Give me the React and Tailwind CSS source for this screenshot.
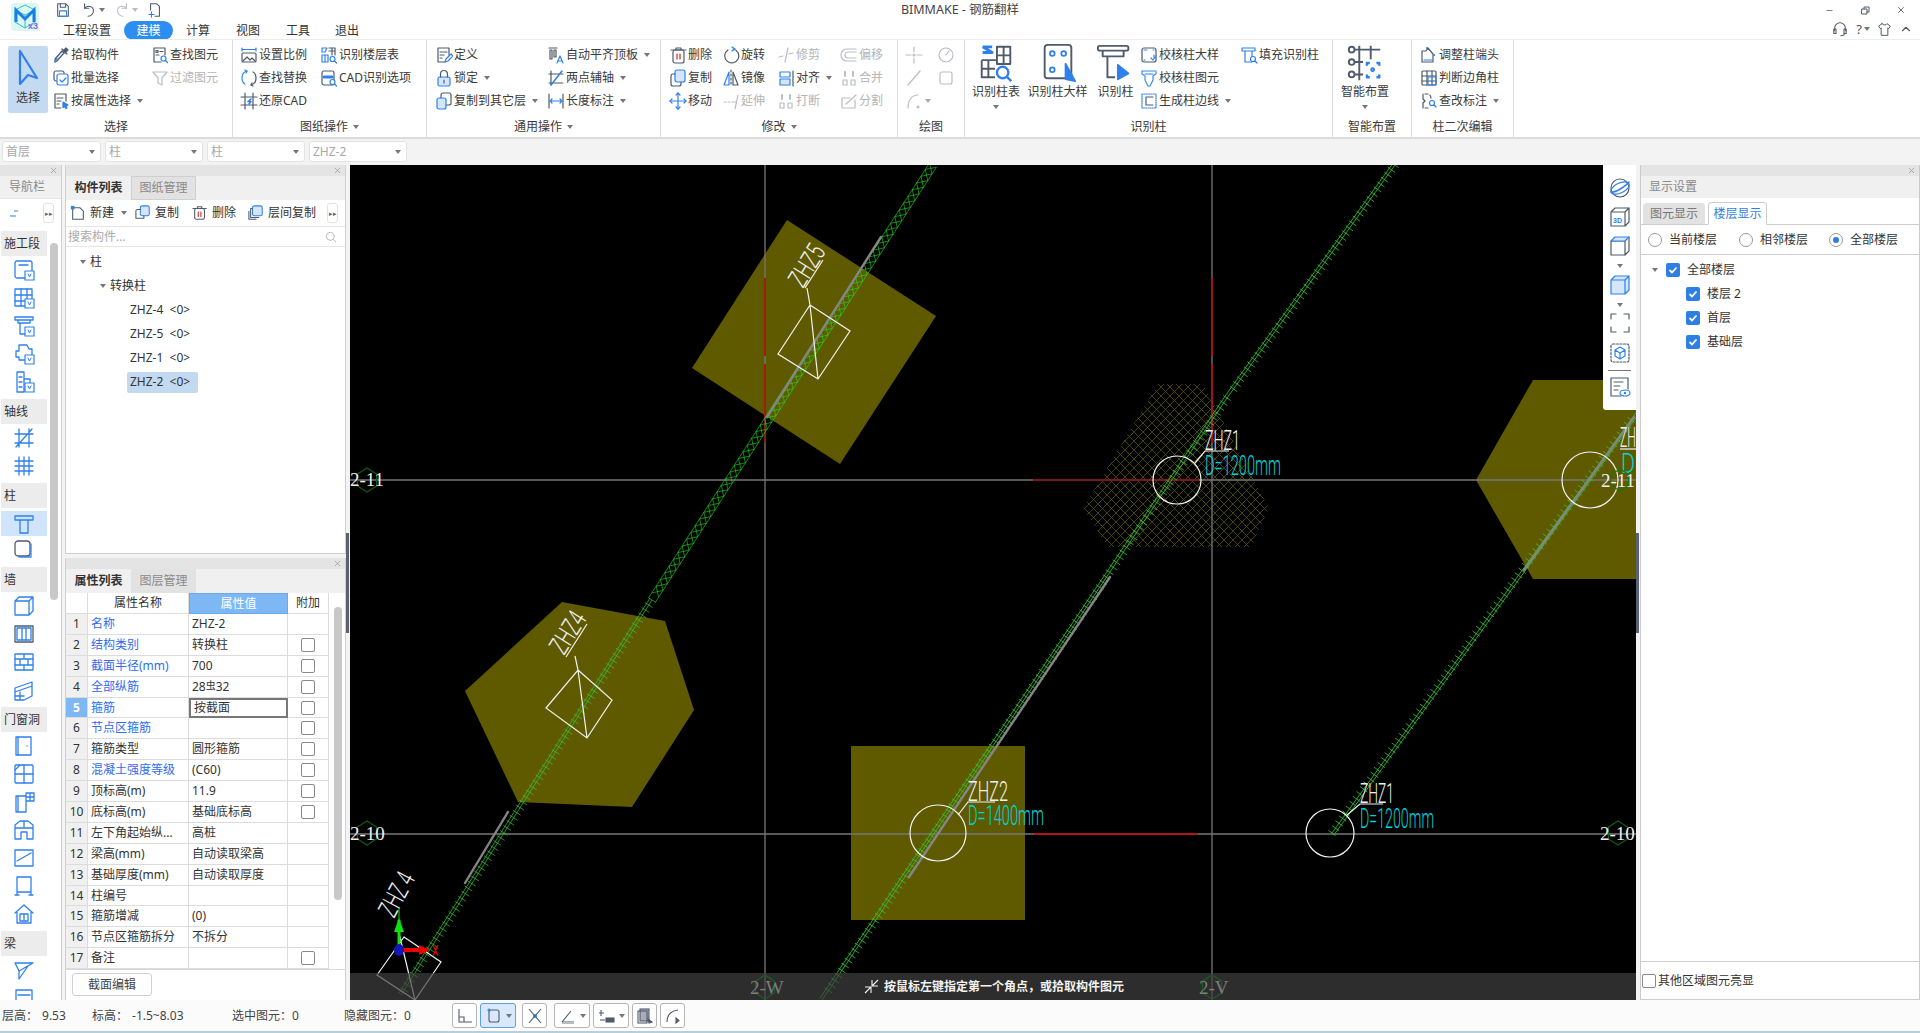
import React from 'react';
import { X, Minus, ChevronUp } from 'lucide-react';

const G = '#4f5b6b';
const B = '#2f80ed';
const L = '#b9bdc4';

const Svg = ({ s = 18, v = 18, children, c = 'shrink-0' }) => (
  <svg width={s} height={s} viewBox={`0 0 ${v} ${v}`} fill="none" stroke={G} strokeWidth="1.2" strokeLinecap="round" strokeLinejoin="round" className={c}>
    {children}
  </svg>
);

// ribbon icons, all drawn on an 18 box
const icons = {
  pick: <><path d="M3 16l2-1 7-8-2-2-7 8z" fill="#e8eef7" /><path d="M10 3l5 5" /><path d="M11 5l3-3 2 2-3 3" fill={G} /><path d="M3 16l2-4" stroke={B} /></>,
  batch: <><rect x="2" y="2" width="10" height="10" rx="2" /><rect x="5" y="5" width="11" height="11" rx="2" stroke={B} fill="#fff" /><path d="M8 11l2 2 4-4" stroke={B} /></>,
  prop: <><path d="M3 2h11v7M3 2v14h6" /><path d="M5 6h6M5 9h4M5 12h2" /><path d="M11 10l5 3-2 1 1 2-1 .5-1-2-2 1z" fill={B} stroke={B} /></>,
  find: <><path d="M3 2h11v7M3 2v14h7" /><rect x="5" y="4.5" width="2" height="2" /><path d="M9 5.500h3M5 9h3" /><circle cx="12.500" cy="12.500" r="2.500" stroke={B} /><path d="M14.500 14.500l2 2" stroke={B} /></>,
  filter: <><path d="M2 3h14l-5 6v7l-4-2V9z" stroke={L} /></>,
  scale: <><path d="M2 2v3M16 2v3M2 3.500h14" stroke={B} /><rect x="2" y="7" width="14" height="9" rx="1" /><path d="M3 15l4-4 3 3 2-2 3 3" /></>,
  layer: <><path d="M2 2h5l-2 4H2zM2 9h6v7H2zM5 9v7" stroke={B} /><path d="M9 2h6v7M12 2v7M9 5h6" /><circle cx="12.500" cy="13" r="2.500" stroke={B} /><path d="M14.500 15l2 2" stroke={B} /></>,
  replace: <><path d="M7 2C3 3 2 6 2 9s1 5 3 6" stroke={B} /><path d="M5 1l2 1-1 2" stroke={B} /><path d="M11 16c4-1 5-4 5-7s-1-5-3-6" stroke={G} /><path d="M13 17l-2-1 1-2" /></>,
  cad: <><rect x="2" y="2" width="12" height="14" rx="2" /><path d="M4 8h8" stroke={B} strokeWidth="3" /><circle cx="12.500" cy="13" r="2.500" stroke={B} fill="#fff" /><path d="M14.500 15l2 2" stroke={B} /></>,
  restore: <><path d="M5 1v16M13 1v16M1 5h16M1 13h16" /><path d="M11 7L8 9.500h3l-2 2.500" stroke={B} strokeWidth="1.6" /></>,
  define: <><path d="M3 2h11v7M3 2v14h7" /><path d="M5 6h7M5 9h4M5 12h2" /><path d="M10 16l1-3 5-5 2 2-5 5z" stroke={B} /></>,
  lock: <><rect x="3" y="8" width="12" height="9" rx="1.500" fill="#d6e6fa" stroke={B} /><path d="M5.500 8V5a3.500 3.500 0 017 0v3" /><path d="M9 11v3" /></>,
  copyTo: <><rect x="6" y="1" width="10" height="12" rx="2" /><rect x="2" y="6" width="9" height="11" rx="2" stroke={B} fill="#d6e6fa" /></>,
  align: <><path d="M2 2h8" /><rect x="3" y="4" width="2" height="9" /><rect x="7" y="4" width="2" height="7" /><path d="M10 17l3-7 3 7M11 15h4" stroke={B} /></>,
  two: <><path d="M2 5h14M2 14h14M4 2v14" /><path d="M4 16L15 2" stroke={B} strokeWidth="1.500" /></>,
  dim: <><path d="M2 2v14M16 2v14" /><path d="M3 9h12M5 7L3 9l2 2M13 7l2 2-2 2" stroke={B} /></>,
  del: <><rect x="4" y="4" width="11" height="13" rx="2" /><path d="M2 4h15M7 4V2h5v2" /><path d="M8 8v5M11 8v5" stroke="#d02020" /></>,
  rotate: <><path d="M11 3a7 7 0 11-5 1" /><path d="M10 1l3 2-3 2" stroke={B} /></>,
  trim: <><path d="M2 11l4-1M12 8l4-1M11 2L8 16" stroke={L} /></>,
  offset: <><path d="M16 3H7a5 5 0 000 12h9M16 6H8a3 3 0 000 6h8" stroke={L} /></>,
  copy: <><rect x="6" y="1" width="10" height="12" rx="2" stroke={B} fill="#d6e6fa" /><path d="M6 5H4a2 2 0 00-2 2v8a2 2 0 002 2h6a2 2 0 002-2v-2" /></>,
  mirror: <><path d="M7 3L2 16h5z" stroke={B} /><path d="M11 3l5 13h-5z" /><path d="M9 1v16" strokeDasharray="2 2" /></>,
  alignL: <><path d="M16 2v15" /><rect x="3" y="3" width="10" height="5" stroke={B} /><rect x="3" y="10" width="10" height="6" stroke={B} fill="#d6e6fa" /></>,
  merge: <><rect x="3" y="11" width="4" height="5" stroke={L} /><rect x="11" y="11" width="4" height="5" stroke={L} /><path d="M5 3v4M13 3v4M5 3h.1M13 3h.1" stroke={L} strokeWidth="2" /></>,
  move: <><path d="M9 1v16M1 9h16" stroke={B} /><path d="M7 3l2-2 2 2M7 15l2 2 2-2M3 7L1 9l2 2M15 7l2 2-2 2" stroke={B} /></>,
  extend: <><path d="M2 10h2M6 10h2M10 10h4M16 3l-3 14" stroke={L} /></>,
  brk: <><rect x="3" y="11" width="4" height="5" stroke={L} /><rect x="11" y="11" width="4" height="5" stroke={L} /><path d="M5 3v4M13 3v4" stroke={L} strokeWidth="2" /></>,
  split: <><path d="M15 8v8H2V6h8" stroke={L} /><path d="M6 12L16 3" stroke={L} /></>,
  point: <><path d="M9 1v5M9 12v5M1 9h5M12 9h5" stroke={L} /><circle cx="9" cy="9" r="1" stroke={L} /></>,
  dial: <><circle cx="9" cy="9" r="7" stroke={L} /><path d="M9 9l3-4" stroke={L} /></>,
  lineD: <><path d="M3 16L15 2" stroke={L} /></>,
  rectD: <><rect x="3" y="3" width="12" height="12" rx="2" stroke={L} /></>,
  arcD: <><path d="M3 16C3 8 7 3 13 3" stroke={L} /><circle cx="13" cy="15" r="1" stroke={L} /></>,
  chkDetail: <><rect x="2" y="2" width="14" height="14" rx="2" /><path d="M4 4h3M4 14h1M13 4h1M14 9v3M11 12l2 2 3-4" stroke={B} strokeDasharray="1.500 1" /></>,
  chkUnit: <><path d="M2 2h14v3l-3 2v4l-3 6H8l-3-6V7L2 5z" stroke={B} strokeDasharray="1.500 1" /><path d="M5 5h8" stroke={B} /></>,
  genEdge: <><rect x="2" y="2" width="14" height="14" stroke={B} strokeDasharray="1 1.200" /><path d="M13 5H6v8h7" /></>,
  fill: <><path d="M2 2h13v3H2zM5 5v11h7V5" stroke={B} /><circle cx="13" cy="13" r="2.500" stroke={B} fill="#fff" /><path d="M15 15l2 2" stroke={B} /></>,
  adjust: <><path d="M2 5h4l2-3 5 6v8H2z" /><path d="M7 2h.1M14 9h.1" stroke={B} strokeWidth="2" /><path d="M4 14h8" stroke={B} /></>,
  corner: <><rect x="2" y="2" width="14" height="14" rx="1" /><path d="M2 7h14M2 12h14M7 2v14M12 2v14" /><rect x="8" y="8" width="8" height="8" stroke={B} /></>,
  edit: <><path d="M3 2v5l2 2-2 2v5" /><path d="M5 2h3M5 16h3" /><circle cx="12" cy="11" r="2.500" stroke={B} /><path d="M14 13l2 2" stroke={B} /><path d="M10 3l1 3" /></>,
};

const Caret = ({ c = '', color = 'border-t-[#777]' }) => (
  <span className={`inline-block h-0 w-0 border-x-[3px] border-t-[4px] border-x-transparent ${color} ${c}`} />
);

const Ribbon = ({ ic, t, caret, dis, c = '' }) => (
  <div className={`flex h-[23px] items-center ${c}`}>
    <Svg>{icons[ic]}</Svg>
    {t && <span className={`ml-[1px] whitespace-nowrap ${dis ? 'text-[#b5b5b5]' : 'text-[#3a3a3a]'}`}>{t}</span>}
    {caret && <Caret c="ml-[6px]" />}
  </div>
);

const Group = ({ w, label, caret, children }) => (
  <div className={`flex h-[97px] shrink-0 flex-col border-r border-[#dcdcdc] ${w}`}>
    <div className="flex h-[77px] pt-[3px]">{children}</div>
    <div className="flex h-[20px] items-center justify-center text-[#3a3a3a]">
      {label}
      {caret && <Caret c="ml-[5px]" />}
    </div>
  </div>
);

const Big = ({ t, caret, w, children }) => (
  <div className={`flex shrink-0 flex-col items-center ${w}`}>
    <svg width="44" height="40" viewBox="0 0 44 42" fill="none" stroke={G} strokeWidth="2" strokeLinejoin="round" className="shrink-0">{children}</svg>
    <span className="whitespace-nowrap leading-[18px] text-[#3a3a3a]">{t}</span>
    {caret && <Caret c="mt-[4px]" />}
  </div>
);

const NavV = ({ children }) => (
  <Svg s={22} v={22}>
    <g stroke={B} strokeWidth="1.300">{children}</g>
    <rect x="12" y="12" width="9" height="9" fill="#fff" stroke={B} />
    <path d="M15 15l1.500 3 1.500-3" stroke={B} strokeWidth="1" />
  </Svg>
);

const NavI = ({ children }) => (
  <Svg s={22} v={22}>
    <g stroke={B} strokeWidth="1.300">{children}</g>
  </Svg>
);

const navSections = [
  {
    title: '施工段', gap: 'mt-0', items: [
      <NavV><rect x="2" y="2" width="17" height="17" rx="2" /><path d="M6 6h9" /></NavV>,
      <NavV><rect x="2" y="2" width="17" height="17" /><path d="M2 8h17M2 14h17M8 2v17M14 2v17" /></NavV>,
      <NavV><path d="M2 2h18v3H2zM5 5v3h12V5M7 8v11h6" /></NavV>,
      <NavV><path d="M6 2h8l2 4h3v11H6v-3H3V8h3z" /></NavV>,
      <NavV><path d="M4 1h7v20H4zM11 8h6v5M6 6h3M6 11h3M6 16h3" /></NavV>,
    ],
  },
  {
    title: '轴线', gap: 'mt-[3px]', items: [
      <NavI><path d="M2 7h18M2 16h18M6 2v18M16 2v18M3 20L19 2" /></NavI>,
      <NavI><path d="M2 6h18M2 11h18M2 16h18M6 2v18M11 2v18M16 2v18" /></NavI>,
    ],
  },
  {
    title: '柱', gap: 'mt-[3px]', items: [
      <NavI><path d="M2 3h18v4H2zM6 7h10M7 7v13h8V7" /></NavI>,
      <NavI><rect x="2" y="2" width="15" height="15" rx="3" stroke={G} /><path d="M18 5v13H6" strokeDasharray="2 1" /></NavI>,
    ],
  },
  {
    title: '墙', gap: 'mt-[3px]', items: [
      <NavI><path d="M2 6h14v14H2zM2 6l4-4h14v14l-4 4M16 6l4-4" /></NavI>,
      <NavI><rect x="2" y="3" width="18" height="16" stroke={G} /><path d="M4 5h14v12H4zM9 5v12M13 5v12" /></NavI>,
      <NavI><rect x="2" y="3" width="18" height="16" /><path d="M2 8h18M2 14h18M11 3v5M7 8v6M15 8v6M11 14v5" /></NavI>,
      <NavI><path d="M2 9l17-6v4L2 13zM2 13v8h9l8-4v-10M7 13v8M2 17h9" /></NavI>,
    ],
  },
  {
    title: '门窗洞', gap: 'mt-[3px]', items: [
      <NavI><rect x="3" y="2" width="15" height="18" /><path d="M5 2v18M14 11h.1" /></NavI>,
      <NavI><rect x="2" y="2" width="18" height="18" rx="1" /><path d="M2 11h18M11 2v18M2 7l5-5" /></NavI>,
      <NavI><path d="M3 5h10v16H3zM5 5v16M13 2h8v8h-8zM17 2v8M13 6h8" /></NavI>,
      <NavI><path d="M2 20V6l5-4h8l5 4v14h-6v-7H8v7zM2 9h18M11 2v7" /></NavI>,
      <NavI><rect x="2" y="3" width="18" height="16" /><path d="M4 14L18 6" /></NavI>,
      <NavI><path d="M4 20V2h14v18M2 20h4M16 20h4M4 17h14" /></NavI>,
      <NavI><path d="M2 10l9-8 9 8M4 9v11h14V9M7 11h8v7H7zM11 11v7" /></NavI>,
    ],
  },
  {
    title: '梁', gap: 'mt-[3px]', items: [
      <NavI><path d="M2 4h18l-14 8zM6 12v8M6 20l9-13" /></NavI>,
      <NavI><rect x="3" y="3" width="16" height="16" /><path d="M5 8h12" /></NavI>,
    ],
  },
];

const rows = [
  ['名称', 'ZHZ-2', 1, 0],
  ['结构类别', '转换柱', 1, 1],
  ['截面半径(mm)', '700', 1, 1],
  ['全部纵筋', <>28<span className="relative -top-[2px] text-[10px]">虫</span>32</>, 1, 1],
  ['箍筋', '按截面', 1, 1],
  ['节点区箍筋', '', 1, 1],
  ['箍筋类型', '圆形箍筋', 0, 1],
  ['混凝土强度等级', '(C60)', 1, 1],
  ['顶标高(m)', '11.9', 0, 1],
  ['底标高(m)', '基础底标高', 0, 1],
  ['左下角起始纵...', '高桩', 0, 0],
  ['梁高(mm)', '自动读取梁高', 0, 0],
  ['基础厚度(mm)', '自动读取厚度', 0, 0],
  ['柱编号', '', 0, 0],
  ['箍筋增减', '(0)', 0, 0],
  ['节点区箍筋拆分', '不拆分', 0, 0],
  ['备注', '', 0, 1],
];

const PanelHead = () => (
  <div className="flex h-[11px] shrink-0 items-center justify-end bg-[#e4e4e4] pr-[3px]">
    <X size={9} color="#999" />
  </div>
);

const Expand = () => (
  <div className="flex h-[20px] w-[11px] items-center justify-center rounded-[3px] border border-[#e2e2e2] bg-white text-[7px] leading-none text-[#666]">▸▸</div>
);

const Check = ({ c = '' }) => (
  <span className={`flex h-[14px] w-[14px] items-center justify-center rounded-[2px] bg-[#2e7fe4] ${c}`}>
    <svg width="10" height="10" viewBox="0 0 10 10" fill="none" stroke="#fff" strokeWidth="1.800"><path d="M1.500 5l2.500 2.500L8.500 2.500" /></svg>
  </span>
);

const Radio = ({ on, t, c }) => (
  <div className={`flex items-center ${c}`}>
    <span className="flex h-[14px] w-[14px] items-center justify-center rounded-full border border-[#999] bg-white">
      {on && <span className="h-[6px] w-[6px] rounded-full bg-[#2e7fe4]" />}
    </span>
    <span className="ml-[7px] text-[#333]">{t}</span>
  </div>
);

// the steel strips: rails with a cross or a rung every few pixels
function lattice(x1, y1, x2, y2, w, step, cross) {
  const len = Math.hypot(x2 - x1, y2 - y1);
  const ux = (x2 - x1) / len;
  const uy = (y2 - y1) / len;
  const nx = (-uy * w) / 2;
  const ny = (ux * w) / 2;
  const f = (n) => n.toFixed(1);
  let d = cross
    ? `M${f(x1 + nx)} ${f(y1 + ny)}L${f(x2 + nx)} ${f(y2 + ny)}M${f(x1 - nx)} ${f(y1 - ny)}L${f(x2 - nx)} ${f(y2 - ny)}`
    : `M${f(x1)} ${f(y1)}L${f(x2)} ${f(y2)}M${f(x1 + nx * 0.6)} ${f(y1 + ny * 0.6)}L${f(x2 + nx * 0.6)} ${f(y2 + ny * 0.6)}`;
  for (let i = 0; i + step <= len; i += step) {
    const ax = x1 + ux * i;
    const ay = y1 + uy * i;
    if (cross) {
      const bx = ax + ux * step;
      const by = ay + uy * step;
      d += `M${f(ax + nx)} ${f(ay + ny)}L${f(bx - nx)} ${f(by - ny)}M${f(ax - nx)} ${f(ay - ny)}L${f(bx + nx)} ${f(by + ny)}`;
    } else {
      d += `M${f(ax + nx)} ${f(ay + ny)}L${f(ax - nx)} ${f(ay - ny)}`;
    }
  }
  return d;
}

const CadText = ({ x, y, t, fill = '#f0f0f0', len, size = 27, rot }) => (
  <text
    x={rot === undefined ? x : 0}
    y={rot === undefined ? y : 0}
    transform={rot === undefined ? undefined : `translate(${x} ${y}) rotate(${rot})`}
    fill={fill}
    fontFamily="'Roboto', 'Liberation Sans', sans-serif"
    fontWeight="300"
    fontSize={size}
    textLength={len}
    lengthAdjust="spacingAndGlyphs"
  >
    {t}
  </text>
);

const Hex = ({ x, y, color = '#0d5f12', r = 12 }) => (
  <polygon points={`${x},${y - r} ${x + r * 0.8},${y - r / 2} ${x + r * 0.8},${y + r / 2} ${x},${y + r} ${x - r * 0.8},${y + r / 2} ${x - r * 0.8},${y - r / 2}`} fill="none" stroke={color} strokeWidth="1.200" />
);

const AxisLabel = ({ x, y, t, fill = '#f0f0f0' }) => (
  <text x={x} y={y} fill={fill} fontFamily="'Liberation Serif', serif" fontSize="19">{t}</text>
);

function Canvas() {
  return (
    <svg width="1286" height="835" viewBox="350 165 1286 835" className="block bg-black">
      <defs>
        <pattern id="hatch" width="9" height="9" patternUnits="userSpaceOnUse">
          <path d="M0 0L9 9M9 0L0 9" stroke="#57530a" strokeWidth="0.800" />
        </pattern>
      </defs>

      <polygon points="1158,384 1203,384 1269,508 1251,547 1108,547 1083,508" fill="url(#hatch)" />
      <polygon points="787,220 936,316 840,464 692,368" fill="#5f5a00" />
      <polygon points="562,602 665,621 694,710 632,807 518,802 465,691" fill="#5f5a00" />
      <rect x="851" y="746" width="174" height="174" fill="#5f5a00" />
      <polygon points="1476,480 1533,380 1640,380 1640,579 1533,579" fill="#5f5a00" />

      <g stroke="#777" strokeWidth="1.300">
        <path d="M350 480H1636M350 834H1636M765 165V1000M1212 165V1000" />
      </g>
      <g strokeWidth="1.500">
        <path d="M765 278V356M765 364V442" stroke="#b40000" />
        <path d="M1212 278V356M1212 364V443" stroke="#c00000" />
        <path d="M1033 480H1199" stroke="#8c0000" />
        <path d="M1034 834H1198" stroke="#d00000" />
      </g>

      <path d={lattice(933, 165, 652, 600, 8, 8, true)} stroke="#22e022" strokeWidth="0.600" fill="none" />
      <path d={lattice(652, 600, 401, 995, 9, 6)} stroke="#37c837" strokeWidth="0.700" fill="none" />
      <path d={lattice(1395, 165, 1227, 398, 9, 6)} stroke="#37c837" strokeWidth="0.800" fill="none" />
      <path d={lattice(1227, 398, 822, 1000, 9, 6)} stroke="#37c837" strokeWidth="0.800" fill="none" />
      <path d={lattice(1332, 833, 1636, 413, 9, 6)} stroke="#37c837" strokeWidth="0.800" fill="none" />

      <g stroke="#858585" strokeWidth="2.400" strokeLinecap="round">
        <path d="M881 237L767 417" />
        <path d="M508 812L465 883" />
        <path d="M1110 577L909 877" />
        <path d="M1634 417L1524 570" />
      </g>

      <g stroke="#f2f2f2" strokeWidth="1.200" fill="none">
        <path d="M810 305L850 331L818 379L778 354Z M810 305L818 379 M810 305L807 288 M805 288L823 260" />
        <path d="M578 670L612 700L587 738L546 708Z M578 670L587 738 M578 670L575 656 M566 657L587 624" />
        <circle cx="1177" cy="480" r="24" />
        <circle cx="1590" cy="480" r="28" />
        <circle cx="938" cy="833" r="28" />
        <circle cx="1330" cy="833" r="24" />
        <path d="M1195 463L1205 451H1229" />
        <path d="M958 815L968 802H995" />
        <path d="M1347 815L1360 804H1383" />
        <path d="M1620 449H1636" />
        <path d="M404 937L441 962L415 1000L377 975Z M399 933L415 1000" />
      </g>

      <CadText x={803} y={289} rot={-58} t="ZHZ5" len={44} />
      <CadText x={564} y={656} rot={-58} t="ZHZ4" len={44} />
      <CadText x={394} y={919} rot={-62} t="ZHZ 4" len={46} />
      <CadText x={1205} y={450} t="ZHZ1" len={35} />
      <CadText x={1205} y={475} t="D=1200mm" fill="#00d2da" len={76} />
      <CadText x={968} y={801} t="ZHZ2" len={40} />
      <CadText x={968} y={825} t="D=1400mm" fill="#00d2da" len={76} />
      <CadText x={1360} y={803} t="ZHZ1" len={34} />
      <CadText x={1360} y={828} t="D=1200mm" fill="#00d2da" len={74} />
      <CadText x={1620} y={447} t="ZH" len={16} />
      <CadText x={1621} y={473} t="D" fill="#00d2da" len={14} />

      <Hex x={367} y={480} />
      <AxisLabel x={350} y={486} t="2-11" />
      <Hex x={367} y={833} />
      <AxisLabel x={350} y={840} t="2-10" />
      <Hex x={1618} y={833} />
      <AxisLabel x={1600} y={840} t="2-10" />
      <Hex x={1620} y={480} r={11} color="#0d7a18" />
      <AxisLabel x={1601} y={487} t="2-11" />

      {/* ucs gizmo */}
      <path d="M399 945V920" stroke="#0fe00f" strokeWidth="3" />
      <path d="M399 908V922" stroke="#0fe00f" strokeWidth="1" />
      <polygon points="399,918 394,932 404,932" fill="#0fe00f" />
      <path d="M402 950H420" stroke="#f00000" strokeWidth="4" />
      <polygon points="430,950 419,945 419,955" fill="#f00000" />
      <ellipse cx="399" cy="950" rx="5" ry="6" fill="#1515b8" />
      <path d="M433 945L438 956M438 945L433 956" stroke="#f00000" strokeWidth="1.200" />
    </svg>
  );
}

const Tool = ({ w, on, caret, children }) => (
  <div className={`flex h-[25px] items-center justify-center rounded-[3px] border ${w} ${on ? 'border-[#5d9ee8] bg-[#d9e8fa]' : 'border-[#b5b5b5] bg-white'}`}>
    <svg width="18" height="18" viewBox="0 0 18 18" fill="none" stroke={G} strokeWidth="1.100">{children}</svg>
    {caret && <Caret c="ml-[3px]" />}
  </div>
);

export default function App() {
  return (
    <div className="flex h-[1033px] w-[1920px] flex-col overflow-hidden bg-[#f3f3f3] text-[12px] leading-none [font-family:'Noto_Sans','Noto_Sans_CJK_SC',sans-serif]">
      {/* title + menu */}
      <div className="grid h-[39px] shrink-0 grid-cols-[1fr_auto_1fr] bg-white">
        <div className="flex">
          <div className="ml-[11px] mt-[3px] h-[28px] w-[28px]">
            <svg width="28" height="28" viewBox="0 0 28 28" fill="none">
              <rect width="28" height="28" rx="4" fill="#dcf6f6" />
              <path d="M14 2l10 5v12l-10 6L4 19V7z" stroke="#35c2b5" strokeWidth="1" />
              <path d="M4 7l10 5 10-5M14 12v13" stroke="#35c2b5" strokeWidth="1" />
              <path d="M5 19V7l9 9 9-9v12" stroke="#1680e8" strokeWidth="3" />
              <text x="17" y="26" fontSize="9" fontWeight="700" fill="#8a63e0" fontFamily="Liberation Sans, sans-serif">x3</text>
            </svg>
          </div>
          <div className="ml-[16px] flex flex-col">
            <div className="flex h-[20px] items-center">
              <Svg s={16}><path d="M3 2h9l3 3v11H3z" /><path d="M6 2v4h6V2" /><rect x="5" y="10" width="8" height="6" stroke={B} /></Svg>
              <Svg s={16} c="ml-[10px] shrink-0"><path d="M4 2v5h5" /><path d="M4 7c4-4 10-2 10 3 0 3-3 6-6 6" /></Svg>
              <Caret c="ml-[2px]" />
              <Svg s={16} c="ml-[9px] shrink-0"><path d="M14 2v5H9" stroke={L} /><path d="M14 7C10 3 4 5 4 10c0 3 3 6 6 6" stroke={L} /></Svg>
              <Caret c="ml-[2px]" color="border-t-[#bbb]" />
              <Svg s={16} c="ml-[9px] shrink-0"><path d="M4 9V2h7l3 3v11H9" /><path d="M5 11v6M2 14h6" stroke={B} /></Svg>
            </div>
            <div className="ml-[8px] flex h-[20px] items-center pt-[1px] text-[#333]">
              <span>工程设置</span>
              <span className="ml-[13px] flex h-[19px] w-[49px] items-center justify-center rounded-full bg-[#2b8ef0] text-white">建模</span>
              <span className="ml-[13px]">计算</span>
              <span className="ml-[26px]">视图</span>
              <span className="ml-[26px]">工具</span>
              <span className="ml-[25px]">退出</span>
            </div>
          </div>
        </div>
        <div className="pt-[3px] text-[12.500px] leading-[14px] text-[#444]">BIMMAKE - 钢筋翻样</div>
        <div className="flex flex-col items-end pr-[7px]">
          <div className="flex h-[20px] items-center pr-[7px] text-[#555]">
            <Minus size={9} />
            <span className="ml-[27px]"><Svg s={9} v={18}><path d="M2 6h10v10H2zM6 6V2h10v10h-4" strokeWidth="2" /></Svg></span>
            <X size={10} className="ml-[26px]" />
          </div>
          <div className="flex h-[18px] items-center">
            <Svg s={16}><path d="M3 11V8a6 6 0 0112 0v3" /><rect x="2" y="9" width="2.500" height="5" /><rect x="13.500" y="9" width="2.500" height="5" /><path d="M14 14c0 2-2 2.500-4 2.500" /></Svg>
            <span className="ml-[8px] text-[13px] text-[#555]">?</span>
            <Caret c="ml-[2px]" />
            <Svg s={15} c="ml-[7px] shrink-0"><path d="M6 2L2 5l2 3 1-1v9h8V7l1 1 2-3-4-3c-1 2-4 2-6 0z" /></Svg>
            <ChevronUp size={14} className="ml-[7px]" color="#555" />
          </div>
        </div>
      </div>

      {/* ribbon */}
      <div className="flex h-[100px] shrink-0 border-y border-y-[#ececec] border-b-[#dcdcdc] border-b-2 bg-white">
        <Group w="w-[233px]" label="选择">
          <div className="ml-[8px] mt-[3px] flex h-[67px] w-[40px] flex-col items-center rounded-[2px] bg-[#c4daf1]">
            <svg width="24" height="40" viewBox="0 0 24 40" fill="none" stroke={B} strokeWidth="2.200" strokeLinejoin="round" className="mt-[2px]"><path d="M4 3v33l8-9 9 3z" /></svg>
            <span className="mt-[4px] text-[#3a3a3a]">选择</span>
          </div>
          <div className="ml-[4px] w-[98px]">
            <Ribbon ic="pick" t="拾取构件" />
            <Ribbon ic="batch" t="批量选择" />
            <Ribbon ic="prop" t="按属性选择" caret />
          </div>
          <div>
            <Ribbon ic="find" t="查找图元" c="ml-[1px]" />
            <Ribbon ic="filter" t="过滤图元" dis c="ml-[1px]" />
          </div>
        </Group>
        <Group w="w-[194px]" label="图纸操作" caret>
          <div className="ml-[7px] w-[80px]">
            <Ribbon ic="scale" t="设置比例" />
            <Ribbon ic="replace" t="查找替换" />
            <Ribbon ic="restore" t="还原CAD" />
          </div>
          <div>
            <Ribbon ic="layer" t="识别楼层表" />
            <Ribbon ic="cad" t="CAD识别选项" />
          </div>
        </Group>
        <Group w="w-[234px]" label="通用操作" caret>
          <div className="ml-[8px] w-[112px]">
            <Ribbon ic="define" t="定义" />
            <Ribbon ic="lock" t="锁定" caret />
            <Ribbon ic="copyTo" t="复制到其它层" caret />
          </div>
          <div>
            <Ribbon ic="align" t="自动平齐顶板" caret />
            <Ribbon ic="two" t="两点辅轴" caret />
            <Ribbon ic="dim" t="长度标注" caret />
          </div>
        </Group>
        <Group w="w-[237px]" label="修改" caret>
          <div className="ml-[8px] w-[53px]">
            <Ribbon ic="del" t="删除" />
            <Ribbon ic="copy" t="复制" />
            <Ribbon ic="move" t="移动" />
          </div>
          <div className="w-[55px]">
            <Ribbon ic="rotate" t="旋转" />
            <Ribbon ic="mirror" t="镜像" />
            <Ribbon ic="extend" t="延伸" dis />
          </div>
          <div className="w-[63px]">
            <Ribbon ic="trim" t="修剪" dis />
            <Ribbon ic="alignL" t="对齐" caret />
            <Ribbon ic="brk" t="打断" dis />
          </div>
          <div>
            <Ribbon ic="offset" t="偏移" dis />
            <Ribbon ic="merge" t="合并" dis />
            <Ribbon ic="split" t="分割" dis />
          </div>
        </Group>
        <Group w="w-[67px]" label="绘图">
          <div className="ml-[7px] w-[32px]">
            <Ribbon ic="point" />
            <Ribbon ic="lineD" />
            <div className="flex h-[23px] items-center"><Svg>{icons.arcD}</Svg><Caret c="ml-[2px]" color="border-t-[#aaa]" /></div>
          </div>
          <div>
            <Ribbon ic="dial" />
            <Ribbon ic="rectD" />
          </div>
        </Group>
        <Group w="w-[368px]" label="识别柱">
          <div className="ml-[6px]">
            <Big t="识别柱表" caret w="w-[50px]">
              <path d="M8 4h10M8 10h10L8 4" stroke={B} strokeWidth="3" />
              <path d="M23 4h14v18H23zM30 4v18M23 13h14M7 18h16M7 18v18h14M14 18v18M7 27h14" />
              <circle cx="29" cy="31" r="6" stroke={B} strokeWidth="2.500" /><path d="M33 35l5 5" stroke={B} strokeWidth="2.500" />
            </Big>
          </div>
          <div className="ml-[6px]">
            <Big t="识别柱大样" w="w-[61px]">
              <rect x="8" y="2" width="28" height="35" rx="3" />
              <circle cx="16" cy="11" r="2.500" stroke={B} strokeWidth="1.800" /><circle cx="28" cy="11" r="2.500" stroke={B} strokeWidth="1.800" /><circle cx="16" cy="28" r="2.500" stroke={B} strokeWidth="1.800" />
              <path d="M30 22v16l10 2z" fill={B} stroke={B} />
            </Big>
          </div>
          <div className="ml-[9px]">
            <Big t="识别柱" w="w-[37px]">
              <rect x="3" y="3" width="32" height="5" rx="2" />
              <path d="M8 8v6h22V8M13 14v22h8" />
              <path d="M24 23v15l11-6z" fill={B} stroke={B} />
            </Big>
          </div>
          <div className="ml-[6px] w-[100px]">
            <Ribbon ic="chkDetail" t="校核柱大样" />
            <Ribbon ic="chkUnit" t="校核柱图元" />
            <Ribbon ic="genEdge" t="生成柱边线" caret />
          </div>
          <div>
            <Ribbon ic="fill" t="填充识别柱" />
          </div>
        </Group>
        <Group w="w-[79px]" label="智能布置">
          <div className="ml-[8px]">
            <Big t="智能布置" caret w="w-[48px]">
              <path d="M6 7h32M6 20h14M6 33h14M16 3v36M28 3v14" />
              <circle cx="8" cy="7" r="3" fill="#fff" /><circle cx="8" cy="20" r="3" fill="#fff" /><circle cx="8" cy="33" r="3" fill="#fff" />
              <path d="M24 24v-3h3M34 21h3v3M37 33v3h-3M27 36h-3v-3" stroke={B} strokeWidth="2.500" />
              <circle cx="30" cy="28" r="1.500" stroke={B} />
            </Big>
          </div>
        </Group>
        <Group w="w-[102px]" label="柱二次编辑">
          <div className="ml-[8px]">
            <Ribbon ic="adjust" t="调整柱端头" />
            <Ribbon ic="corner" t="判断边角柱" />
            <Ribbon ic="edit" t="查改标注" caret />
          </div>
        </Group>
      </div>

      {/* floor / type selectors */}
      <div className="flex h-[26px] shrink-0 items-start gap-[4px] pl-[2px] pt-[2px]">
        {[['首层', 'w-[99px]'], ['柱', 'w-[98px]'], ['柱', 'w-[98px]'], ['ZHZ-2', 'w-[98px]']].map(([t, w], i) => (
          <div key={i} className={`flex h-[21px] items-center justify-between rounded-[3px] border border-[#e3e3e3] bg-white pl-[3px] pr-[5px] text-[#a8a8a8] ${w}`}>
            {t}
            <Caret />
          </div>
        ))}
      </div>

      {/* main area */}
      <div className="flex h-[835px] shrink-0">
        {/* nav */}
        <div className="flex w-[62px] shrink-0 flex-col border-r border-[#d0d0d0] bg-white">
          <PanelHead />
          <div className="flex h-[22px] shrink-0 items-center bg-[#f0f0f0] pl-[9px] text-[#8a8a8a]">导航栏</div>
          <div className="flex h-[33px] shrink-0 items-start justify-between border-t border-[#e6e6e6] pl-[9px] pr-[7px] pt-[4px]">
            <svg width="12" height="20" viewBox="0 0 12 20" fill="none" stroke={B} strokeWidth="1.200"><path d="M5 8h4M1 13h6" /></svg>
            <Expand />
          </div>
          <div className="flex min-h-0 flex-1 overflow-hidden">
            <div className="w-[47px] pl-[1px]">
              {navSections.map((s) => (
                <div key={s.title} className={s.gap}>
                  <div className="flex h-[25px] items-center bg-[#ececec] pl-[3px] text-[#333]">{s.title}</div>
                  {s.items.map((it, i) => (
                    <div key={i} className="flex h-[28px] items-center justify-center">
                      {s.title === '柱' && i === 0 ? (
                        <div className="mt-[3px] flex h-[25px] w-full items-center justify-center bg-[#d0e5fb]">{it}</div>
                      ) : it}
                    </div>
                  ))}
                </div>
              ))}
            </div>
            <div className="ml-[3px] w-[8px]">
              <div className="mt-[12px] h-[357px] rounded-full bg-[#c8c8c8]" />
            </div>
          </div>
        </div>

        {/* components + properties */}
        <div className="ml-[3px] flex w-[281px] shrink-0 flex-col">
          <div className="flex h-[389px] shrink-0 flex-col border-x border-b border-[#d0d0d0] bg-white">
            <PanelHead />
            <div className="flex h-[24px] shrink-0 bg-[#f0f0f0]">
              <div className="flex w-[65px] items-center justify-center font-bold text-[#333]">构件列表</div>
              <div className="flex w-[65px] items-center justify-center border border-[#cfcfcf] bg-[#e2e2e2] text-[#8a8a8a]">图纸管理</div>
            </div>
            <div className="flex h-[27px] shrink-0 items-center border-b border-[#e6e6e6] pl-[4px] pr-[7px] text-[#333]">
              <Svg s={16}><path d="M3 3h8l4 4v9H3z" /><path d="M1 1h4v4H1z" fill={B} stroke="none" /></Svg>
              <span className="ml-[4px]">新建</span>
              <Caret c="ml-[7px]" />
              <Svg s={16} c="ml-[8px] shrink-0"><rect x="6" y="1" width="10" height="11" rx="2" stroke={B} fill="#d6e6fa" /><path d="M6 5H3a2 2 0 00-2 2v8h9v-3" /></Svg>
              <span className="ml-[4px]">复制</span>
              <Svg s={16} c="ml-[13px] shrink-0"><rect x="3" y="4" width="11" height="12" rx="2" /><path d="M1 4h15M6 4V2h5v2" /><path d="M7 8v5M10 8v5" stroke="#d02020" /></Svg>
              <span className="ml-[4px]">删除</span>
              <Svg s={16} c="ml-[12px] shrink-0"><rect x="5" y="1" width="11" height="11" rx="2" stroke={B} fill="#d6e6fa" /><path d="M5 4H3v10h9M1 7v9h8" /></Svg>
              <span className="ml-[4px]">层间复制</span>
              <div className="ml-auto"><Expand /></div>
            </div>
            <div className="flex h-[20px] shrink-0 items-center justify-between border-b border-[#e6e6e6] pl-[2px] pr-[8px] text-[#aaa]">
              搜索构件...
              <Svg s={12}><circle cx="8" cy="8" r="6" stroke="#bbb" strokeWidth="1.500" /><path d="M13 13l3 3" stroke="#bbb" strokeWidth="1.500" /></Svg>
            </div>
            <div className="min-h-0 flex-1 pt-[3px] text-[#333]">
              <div className="flex h-[24px] items-center pl-[14px]"><Caret /><span className="ml-[4px]">柱</span></div>
              <div className="flex h-[24px] items-center pl-[34px]"><Caret /><span className="ml-[4px]">转换柱</span></div>
              {['ZHZ-4', 'ZHZ-5', 'ZHZ-1', 'ZHZ-2'].map((t) => (
                <div key={t} className="flex h-[24px] items-center pl-[61px]">
                  <span className={`flex h-[21px] w-[71px] items-center rounded-[2px] pl-[3px] ${t === 'ZHZ-2' ? 'bg-[#c3d9f0]' : ''}`}>{t}&nbsp;&nbsp;&lt;0&gt;</span>
                </div>
              ))}
            </div>
          </div>

          <div className="mt-[4px] flex min-h-0 flex-1 flex-col border-x border-[#d0d0d0] bg-white">
            <PanelHead />
            <div className="flex h-[24px] shrink-0 bg-[#f0f0f0]">
              <div className="flex w-[65px] items-center justify-center font-bold text-[#333]">属性列表</div>
              <div className="flex w-[65px] items-center justify-center bg-[#e2e2e2] text-[#8a8a8a]">图层管理</div>
            </div>
            <div className="flex shrink-0 border-b border-[#d8d8d8]">
              <div className="w-[263px] shrink-0 border-r border-[#dcdcdc]">
                <div className="grid h-[21px] grid-cols-[22px_101px_99px_1fr] text-[#333]">
                  <div className="border-b border-r border-[#dcdcdc]" />
                  <div className="flex items-center justify-center border-b border-r border-[#dcdcdc]">属性名称</div>
                  <div className="flex items-center justify-center border border-[#6aa9ee] bg-[#7db8f5] text-white">属性值</div>
                  <div className="flex items-center justify-center border-b border-[#dcdcdc]">附加</div>
                </div>
                {rows.map(([name, val, blue, box], i) => (
                  <div key={i} className="grid h-[20.900px] grid-cols-[22px_101px_99px_1fr] text-[#333]">
                    <div className={`flex items-center justify-center border-b border-r border-[#dcdcdc] ${i === 4 ? 'bg-[#7db8f5] font-bold text-white' : 'bg-[#f0f0f0]'}`}>{i + 1}</div>
                    <div className={`flex items-center overflow-hidden whitespace-nowrap border-b border-r border-[#dcdcdc] pl-[3px] ${blue ? 'text-[#2f6bf0]' : ''}`}>{name}</div>
                    <div className={`flex items-center whitespace-nowrap pl-[3px] ${i === 4 ? 'border-2 border-[#777]' : 'border-b border-r border-[#dcdcdc]'}`}>{val}</div>
                    <div className="flex items-center justify-center border-b border-[#dcdcdc]">
                      {box ? <span className="h-[14px] w-[14px] rounded-[2px] border border-[#888] bg-white" /> : null}
                    </div>
                  </div>
                ))}
              </div>
              <div className="flex-1 pl-[5px]">
                <div className="mt-[14px] h-[293px] w-[8px] rounded-full bg-[#c8c8c8]" />
              </div>
            </div>
            <div className="flex flex-1 items-start pl-[6px] pt-[3px]">
              <div className="flex h-[23px] w-[80px] items-center justify-center rounded-[3px] border border-[#d0d0d0] text-[#444]">截面编辑</div>
            </div>
          </div>
        </div>

        {/* splitter + canvas */}
        <div className="flex w-[4px] shrink-0 items-center">
          <div className="h-[100px] w-[3px] bg-[#5a6270]" />
        </div>
        <div className="relative h-[835px] w-[1286px] shrink-0 overflow-hidden">
          <Canvas />

          {/* floating view tools */}
          <div className="absolute right-0 top-0 flex h-[245px] w-[33px] flex-col items-center rounded-bl-[3px] bg-white pt-[12px]">
            <Svg s={22} v={22}><ellipse cx="11" cy="11" rx="9" ry="9" /><path d="M2 15C6 16 16 10 20 5" stroke={B} strokeWidth="1.500" /><ellipse cx="11" cy="11" rx="10" ry="5" transform="rotate(-25 11 11)" stroke={B} /></Svg>
            <Svg s={22} v={22} c="mt-[7px] shrink-0"><path d="M2 6h14v14H2zM2 6l4-4h14v14l-4 4M16 6l4-4" /><text x="4" y="17" fontSize="7" fontWeight="700" fill={B} stroke="none" fontFamily="Liberation Sans, sans-serif">3D</text></Svg>
            <Svg s={22} v={22} c="mt-[7px] shrink-0"><path d="M2 6h14v14H2zM16 20l4-4V2" /><path d="M2 6l4-4h14l-4 4z" stroke={B} fill="#d6e6fa" /></Svg>
            <Caret c="mt-[7px]" />
            <Svg s={22} v={22} c="mt-[6px] shrink-0"><path d="M2 6h14v14H2zM2 6l4-4h14v14l-4 4M16 6l4-4" stroke={B} fill="#d6e6fa" /></Svg>
            <Caret c="mt-[7px]" />
            <Svg s={22} v={22} c="mt-[5px] shrink-0"><path d="M2 7V2h5M15 2h5v5M20 15v5h-5M7 20H2v-5" /></Svg>
            <Svg s={22} v={22} c="mt-[8px] shrink-0"><rect x="2" y="2" width="18" height="18" rx="2" strokeDasharray="2 1.500" /><path d="M11 5l5 3v6l-5 3-5-3V8zM6 8l5 3 5-3M11 11v6" stroke={B} /></Svg>
            <div className="mt-[6px] h-px w-[23px] bg-[#777]" />
            <Svg s={22} v={22} c="mt-[5px] shrink-0"><path d="M2 2h17v11M2 2v18h10" /><path d="M5 6h9M5 10h6M5 14h4" /><ellipse cx="16" cy="17" rx="5" ry="3" stroke={B} /><circle cx="16" cy="17" r="1.200" fill={B} stroke="none" /></Svg>
          </div>

          {/* hint strip */}
          <div className="absolute inset-x-0 bottom-0 h-[27px] bg-[#404040]/70">
            <div className="ml-[514px] flex h-full items-center font-bold text-[#f2f2f2]">
              <svg width="15" height="15" viewBox="0 0 15 15" fill="none" stroke="#f2f2f2" strokeWidth="1.100"><path d="M1 14l6-6M1 8h6v6M14 1L8 7M8 1v6h6" /></svg>
              <span className="ml-[5px]">按鼠标左键指定第一个角点，或拾取构件图元</span>
            </div>
          </div>
          <svg width="1286" height="27" viewBox="350 973 1286 27" className="absolute bottom-0 left-0">
            <Hex x={765} y={987} color="#1c5e22" />
            <AxisLabel x={750} y={994} t="2-W" fill="#7d7d7d" />
            <Hex x={1212} y={987} color="#1c5e22" />
            <AxisLabel x={1199} y={994} t="2-V" fill="#7d7d7d" />
          </svg>
        </div>

        {/* right panel */}
        <div className="flex w-[4px] shrink-0 items-center">
          <div className="h-[100px] w-[3px] bg-[#5a6270]" />
        </div>
        <div className="flex w-[280px] shrink-0 flex-col border-x border-[#c9c9cf] bg-white">
          <PanelHead />
          <div className="flex h-[22px] shrink-0 items-center bg-[#f0f0f0] pl-[8px] text-[#8a8a8a]">显示设置</div>
          <div className="flex h-[27px] shrink-0 items-end border-b border-[#ccc] pl-[2px] pt-[5px]">
            <div className="flex h-[21px] w-[62px] items-center justify-center rounded-t-[4px] bg-[#e2e2e2] text-[#777]">图元显示</div>
            <div className="relative top-px ml-[3px] flex h-[23px] w-[59px] items-center justify-center rounded-t-[4px] border border-b-white border-[#ccc] bg-white text-[#2e7fe4]">楼层显示</div>
          </div>
          <div className="flex h-[30px] shrink-0 items-center border-b border-[#ccc] pl-[7px]">
            <Radio t="当前楼层" c="w-[91px]" />
            <Radio t="相邻楼层" c="w-[90px]" />
            <Radio on t="全部楼层" />
          </div>
          <div className="min-h-0 flex-1 pt-[3px] text-[#333]">
            <div className="flex h-[24px] items-center pl-[11px]"><Caret /><Check c="ml-[8px]" /><span className="ml-[7px]">全部楼层</span></div>
            {['楼层 2', '首层', '基础层'].map((t) => (
              <div key={t} className="flex h-[24px] items-center pl-[45px]"><Check /><span className="ml-[7px]">{t}</span></div>
            ))}
          </div>
          <div className="flex h-[39px] shrink-0 items-center border-y border-[#ccc] pl-[1px] text-[#333]">
            <span className="h-[14px] w-[14px] rounded-[2px] border border-[#888]" />
            <span className="ml-[2px]">其他区域图元亮显</span>
          </div>
        </div>
      </div>

      {/* status bar */}
      <div className="flex h-[33px] shrink-0 items-start border-b-2 border-[#b5d0da] bg-[#fbfbfb] pt-[3px] text-[#444]">
        <div className="flex h-[25px] w-[92px] items-center pl-[2px]">层高：<span className="ml-[4px]">9.53</span></div>
        <div className="flex h-[25px] w-[140px] items-center">标高：<span className="ml-[4px]">-1.5~8.03</span></div>
        <div className="flex h-[25px] w-[112px] items-center">选中图元：<span>0</span></div>
        <div className="flex h-[25px] w-[108px] items-center">隐藏图元：<span>0</span></div>
        <div className="flex gap-[3px]">
          <Tool w="w-[25px]"><path d="M3 2v13h13M3 10h5v5" /></Tool>
          <Tool w="w-[36px]" on caret><rect x="4" y="3" width="10" height="12" rx="2" /><circle cx="4" cy="3" r="1" stroke={B} /></Tool>
          <Tool w="w-[25px] ml-[3px]"><path d="M3 2l12 14M15 2L3 16" /><circle cx="9" cy="9" r="1.500" stroke={B} /></Tool>
          <Tool w="w-[36px] ml-[4px]" caret><path d="M3 15L12 4M3 15h12" /><path d="M3 16h12" stroke={L} strokeWidth="2" /></Tool>
          <Tool w="w-[36px]" caret><path d="M3 3v6M1 6h5" /><rect x="8" y="11" width="8" height="4" fill={G} /><path d="M2 13h5" /></Tool>
          <Tool w="w-[25px]"><rect x="4" y="2" width="9" height="12" fill="#aab" /><rect x="2" y="4" width="9" height="12" /><path d="M12 12l4 3-3 1z" fill={G} /></Tool>
          <Tool w="w-[25px]"><path d="M3 15C3 8 6 4 14 3" /><path d="M12 11v5l3-2.500z" fill={G} /></Tool>
        </div>
      </div>
    </div>
  );
}
